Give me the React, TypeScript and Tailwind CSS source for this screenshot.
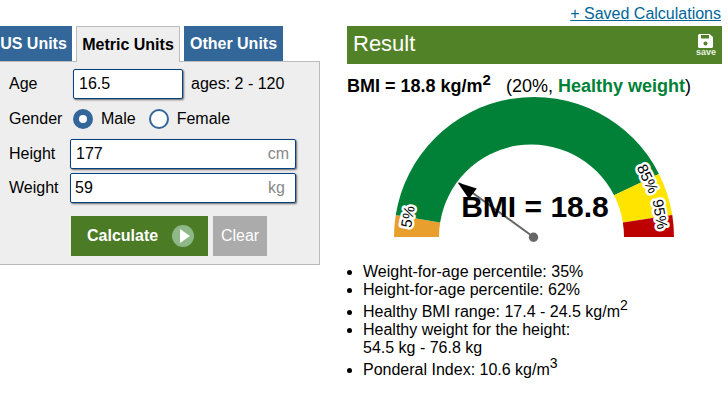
const font = "font-['Liberation_Sans',Arial,sans-serif]";

// polar helper for the gauge: angle in degrees, 0 = left end, 180 = right end
const cy = 142;
const pt = (x: number, r: number, deg: number) => {
  const a = (deg * Math.PI) / 180;
  return `${(x - r * Math.cos(a)).toFixed(2)} ${(cy - r * Math.sin(a)).toFixed(2)}`;
};
// outer and inner circle are not quite concentric in the reference
const outerX = 187;
const innerX = 184.5;
const arc = (from: number, to: number) =>
  `M${pt(outerX, 140, from)} A140 140 0 0 1 ${pt(outerX, 140, to)} L${pt(innerX, 92.5, to)} A92.5 92.5 0 0 0 ${pt(innerX, 92.5, from)} Z`;

function Gauge() {
  return (
    <svg width="375" height="150" viewBox="0 0 375 150" className="block">
      <path d={arc(0, 9)} fill="#e89f2d" />
      <path d={arc(9, 153.2)} fill="#008137" />
      <path d={arc(153.2, 171)} fill="#ffe400" />
      <path d={arc(171, 180)} fill="#bd0000" />
      <g fontFamily="'Liberation Sans', Arial, sans-serif" fontSize="15" fill="#000" stroke="#fff" strokeWidth="5" paintOrder="stroke" strokeLinejoin="round">
        <text transform="translate(66 122.5) rotate(-80)" textAnchor="middle">5%</text>
        <text transform="translate(296 86) rotate(64)" textAnchor="middle">85%</text>
        <text transform="translate(308 120) rotate(80)" textAnchor="middle">95%</text>
      </g>
      <line x1="186.5" y1="142" x2="112" y2="88" stroke="#666" strokeWidth="2" />
      <polygon points="110.7,87.5 129.7,93.5 122,104" fill="#000" />
      <circle cx="186.5" cy="142.3" r="4.7" fill="#666" />
      <text x="188" y="122" textAnchor="middle" fontFamily="'Liberation Sans', Arial, sans-serif" fontWeight="700" fontSize="30" fill="#000">
        BMI = 18.8
      </text>
    </svg>
  );
}

function Field({ value, unit, left, unitRight }: { value: string; unit: string; left: string; unitRight: string }) {
  return (
    <div className={`flex h-[30px] w-[226px] items-center rounded-[2px] border border-[#044284] bg-white shadow-[1px_1px_2px_#666] ${left} ${unitRight}`}>
      <input defaultValue={value} className="min-w-0 flex-1 bg-transparent text-base text-black outline-none" />
      <span className="text-base text-[#888]">{unit}</span>
    </div>
  );
}

export default function App() {
  return (
    <div className={`${font} flex h-[407px] w-[728px] overflow-hidden bg-white text-base text-black`}>
      {/* Left form */}
      <div className="-ml-[6px] mt-[26px] w-[326px] shrink-0">
        <div className="relative z-10 flex h-[36px] gap-1 font-bold">
          <div className="flex h-[35px] w-[78px] items-center justify-center bg-[#336699] pl-[1px] text-white">US Units</div>
          <div className="flex h-[36px] w-[104px] items-center justify-center border border-b-0 border-[#bbb] bg-[#eee]">Metric Units</div>
          <div className="flex h-[35px] w-[99px] items-center justify-center bg-[#336699] text-white">Other Units</div>
        </div>
        <div className="-mt-[1px] h-[204px] border border-[#bbb] bg-[#eee]">
          <div className="flex h-[37px] items-center pl-[14px] pt-[7px]">
            <span className="w-[64px]">Age</span>
            <input
              defaultValue="16.5"
              className="h-[30px] w-[110px] rounded-[2px] border border-[#044284] bg-white pl-[5px] text-base text-black shadow-[1px_1px_2px_#666] outline-none"
            />
            <span className="ml-[8px]">ages: 2 - 120</span>
          </div>
          <div className="mt-[1px] flex h-[37px] items-center pl-[14px]">
            <span className="w-[64px]">Gender</span>
            <span className="flex h-[20px] w-[20px] items-center justify-center rounded-full bg-[#336699]">
              <span className="h-[8px] w-[8px] rounded-full bg-white" />
            </span>
            <span className="ml-[8px]">Male</span>
            <span className="ml-[13px] h-[20px] w-[20px] rounded-full border-2 border-[#336699] bg-white" />
            <span className="ml-[8px]">Female</span>
          </div>
          <div className="flex h-[34px] items-center pl-[14px]">
            <span className="w-[61px]">Height</span>
            <Field value="177" unit="cm" left="pl-[5px]" unitRight="pr-[6px]" />
          </div>
          <div className="flex h-[34px] items-center pl-[14px]">
            <span className="w-[61px]">Weight</span>
            <Field value="59" unit="kg" left="pl-[4px]" unitRight="pr-[10px]" />
          </div>
          <div className="mt-[11px] flex gap-[5px] pl-[76px]">
            <button className="flex h-[40px] w-[137px] items-center bg-[#4c7b25] pl-[16px] font-bold text-white">
              Calculate
              <svg width="22" height="22" viewBox="0 0 22 22" className="ml-[14px]">
                <circle cx="11" cy="11" r="11" fill="#8fb888" />
                <polygon points="8,4 18,11 8,18" fill="#fff" />
              </svg>
            </button>
            <button className="h-[40px] w-[54px] bg-[#ababab] text-white">Clear</button>
          </div>
        </div>
      </div>

      {/* Result column */}
      <div className="ml-[27px] w-[375px] shrink-0">
        <div className="flex h-[26px] items-center justify-end pr-[1px] pt-[2px]">
          <a className="text-[#006699] underline">+ Saved Calculations</a>
        </div>
        <div className="flex h-[38px] items-center justify-between bg-[#518228] pl-[6px] pr-[6px] text-white">
          <span className="-mt-[3px] text-[22px]">Result</span>
          <div className="flex flex-col items-center pt-[1px] text-[#e8f0e0]">
            <svg width="15" height="14" viewBox="0 0 15 14" className="block">
              <path d="M1.5 0H11.5L15 3V12.5A1.5 1.5 0 0 1 13.5 14H1.5A1.5 1.5 0 0 1 0 12.5V1.5A1.5 1.5 0 0 1 1.5 0Z" fill="#fff" />
              <rect x="3" y="1" width="8" height="3.5" fill="#518228" />
              <circle cx="7.5" cy="9.5" r="2" fill="#518228" />
            </svg>
            <span className="text-[9px] font-bold leading-[9px]">save</span>
          </div>
        </div>
        <div className="flex h-[34px] items-end whitespace-pre pb-[2px] text-[18px] leading-[20px]">
          <b>
            BMI = 18.8 kg/m<sup className="text-[15px]">2</sup>
          </b>
          <span>
            {"   (20%, "}
            <b className="text-[#008137]">Healthy weight</b>)
          </span>
        </div>
        <div className="mt-[-3px]">
          <Gauge />
        </div>
        <ul className="mt-[18px] list-disc pl-[16px] leading-[18px] marker:text-black">
          <li>Weight-for-age percentile: 35%</li>
          <li>Height-for-age percentile: 62%</li>
          <li className="pt-1">
            Healthy BMI range: 17.4 - 24.5 kg/m<sup className="text-[14px]">2</sup>
          </li>
          <li>
            Healthy weight for the height:
            <br />
            54.5 kg - 76.8 kg
          </li>
          <li className="pt-1">
            Ponderal Index: 10.6 kg/m<sup className="text-[14px]">3</sup>
          </li>
        </ul>
      </div>
    </div>
  );
}
